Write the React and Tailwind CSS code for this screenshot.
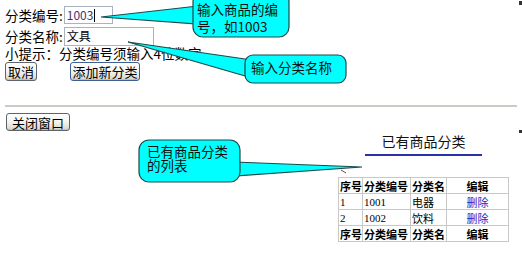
import React from 'react';

const cjk = { fontFamily: '"Noto Sans CJK SC", "Liberation Sans", sans-serif' };
const serif = { fontFamily: '"Liberation Serif", "Noto Sans CJK SC", serif' };

function Callouts() {
  const fill = '#00ffff';
  const line = '#1d4a4a';
  return (
    <>
      <svg className="absolute left-0 top-0 pointer-events-none" width="522" height="253" viewBox="0 0 522 253">
        {/* tail + box 1 */}
        <polygon points="198,6 101,17 198,24" fill={fill} stroke={line} strokeWidth="1.2" />
        <rect x="193" y="-8" width="96" height="45" rx="10" fill={fill} stroke={line} strokeWidth="1.2" />
        {/* tail + box 2 */}
        <polygon points="252,60 128,42 252,78" fill={fill} stroke={line} strokeWidth="1.2" />
        <rect x="245" y="55" width="101" height="28" rx="8" fill={fill} stroke={line} strokeWidth="1.2" />
        {/* tail + box 3 */}
        <polygon points="234,162 362,167 234,176" fill={fill} stroke={line} strokeWidth="1.2" />
        <rect x="139" y="140" width="101" height="42" rx="10" fill={fill} stroke={line} strokeWidth="1.2" />
        <path d="M341 170 L346 173" stroke="#555" strokeWidth="1" />
        <rect x="519" y="1" width="3" height="4" fill="#333" />
        <rect x="519" y="130" width="3" height="3" fill="#333" />
      </svg>
      <div className="absolute left-[197px] top-[1px] w-[90px] text-[13.5px] leading-[17px] text-[#111]" style={cjk}>
        输入商品的编<br />号，如1003
      </div>
      <div className="absolute left-[251px] top-[59px] whitespace-nowrap text-[13.5px] leading-[17px] text-[#111]" style={cjk}>
        输入分类名称
      </div>
      <div className="absolute left-[147px] top-[144px] w-[90px] text-[13.5px] leading-[14px] text-[#111]" style={cjk}>
        已有商品分类<br />的列表
      </div>
    </>
  );
}

function XpButton({ children, className }) {
  return (
    <button
      className={`flex items-center justify-center whitespace-nowrap rounded-[3px] border bg-gradient-to-b from-white via-[#f4f3ee] to-[#d8d5c8] text-[13px] text-black leading-none shadow-[inset_0_-1px_0_#c4c1b4] ${className}`}
      style={cjk}
    >
      {children}
    </button>
  );
}

export default function App() {
  const rows = [
    { id: '1', code: '1001', name: '电器' },
    { id: '2', code: '1002', name: '饮料' },
  ];
  const cell = 'border border-[#c8c8c8] px-[1px] py-0 h-[16px] leading-[14px] whitespace-nowrap overflow-hidden';
  return (
    <div className="relative w-[522px] h-[253px] overflow-hidden bg-white text-black" style={cjk}>
      <div className="pl-[5px] pt-[6px] text-[13.5px]">
        <div className="flex items-center h-[18px]">
          <span>分类编号:</span>
          <div className="ml-[1px] flex items-center w-[49px] h-[18px] border border-[#a9b3bf] pl-[2px] text-[12px] text-[#4b2d6f]" style={cjk}>
            1003<span className="ml-[1px] inline-block w-[1px] h-[13px] bg-black" />
          </div>
        </div>
        <div className="mt-[3px] flex items-center h-[18px]">
          <span>分类名称:</span>
          <div className="ml-[1px] flex items-center w-[90px] h-[19px] border border-[#a9b3bf] pl-[2px] text-[12px]">
            文具
          </div>
        </div>
        <div className="h-[17px] leading-[17px]">小提示：分类编号须输入4位数字</div>
        <div className="flex items-center gap-[33px]">
          <XpButton className="w-[32px] h-[19px] border-[#5c6470]">取消</XpButton>
          <XpButton className="w-[70px] h-[19px] border-[#3d5f93]">添加新分类</XpButton>
        </div>
      </div>

      <div className="mx-[5px] mt-[24px] h-[2px] bg-[#cbcbc3]" />

      <div className="flex items-start">
        <XpButton className="ml-[6px] mt-[6px] w-[64px] h-[18px] border-[#5c6470]">关闭窗口</XpButton>
        <div className="ml-auto mr-[13px] w-[171px] mt-[25px] flex flex-col items-center">
          <div className="h-[18px] leading-[18px] text-[14px] text-[#111]">已有商品分类</div>
          <div className="mt-[4px] w-[117px] h-[2px] bg-[#2b2fa8]" />
          <table className="mt-[21px] w-[171px] table-fixed border-collapse border border-[#b8b8b8] text-[11px]">
            <colgroup>
              <col className="w-[24px]" />
              <col className="w-[48px]" />
              <col className="w-[36px]" />
              <col />
            </colgroup>
            <thead>
              <tr className="font-bold">
                <td className={cell}>序号</td>
                <td className={cell}>分类编号</td>
                <td className={cell}>分类名</td>
                <td className={`${cell} text-center`}>编辑</td>
              </tr>
            </thead>
            <tbody>
              {rows.map((r) => (
                <tr key={r.id}>
                  <td className={cell} style={serif}>{r.id}</td>
                  <td className={cell} style={serif}>{r.code}</td>
                  <td className={cell}>{r.name}</td>
                  <td className={`${cell} text-center text-[#2424c8]`}>删除</td>
                </tr>
              ))}
              <tr className="font-bold">
                <td className={cell}>序号</td>
                <td className={cell}>分类编号</td>
                <td className={cell}>分类名</td>
                <td className={`${cell} text-center`}>编辑</td>
              </tr>
            </tbody>
          </table>
        </div>
      </div>

      <Callouts />
    </div>
  );
}
